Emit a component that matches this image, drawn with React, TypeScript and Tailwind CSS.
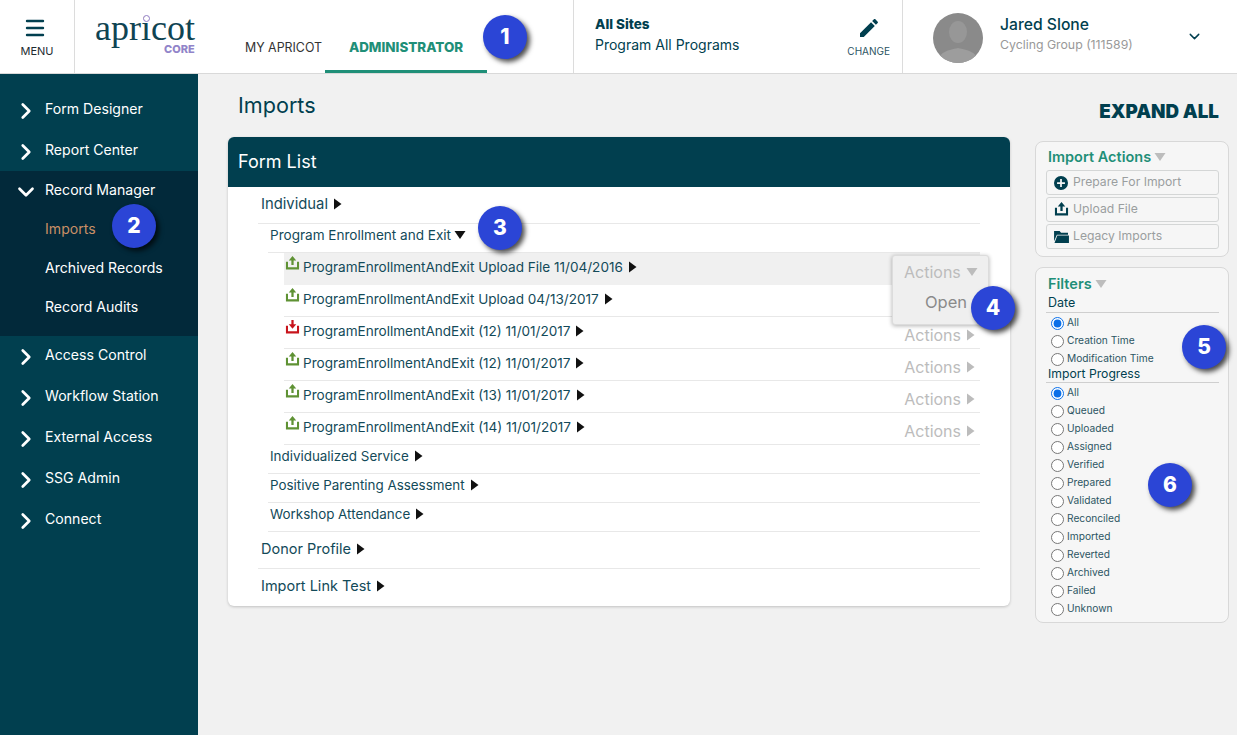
import React from "react";
import { ChevronDown, ChevronRight, Menu } from "lucide-react";

const Badge = ({ n, className }: { n: number; className: string }) => (
  <div
    className={`absolute z-30 w-11 h-11 rounded-full bg-[#2b45d6] text-white font-extrabold text-[21px] flex items-center justify-center shadow-[3px_3px_5px_rgba(0,0,0,0.7)] ${className}`}
  >
    {n}
  </div>
);

const Tri = ({ down, className = "" }: { down?: boolean; className?: string }) =>
  down ? (
    <svg viewBox="0 0 12 8" className={`w-3 h-2 fill-current ${className}`}>
      <path d="M0.5 0h11L6 8z" />
    </svg>
  ) : (
    <svg viewBox="0 0 8 12" className={`w-[9px] h-3 fill-current ${className}`}>
      <path d="M0.5 0.5L8 6l-7.5 5.5z" />
    </svg>
  );

const UploadIcon = ({ red, className = "" }: { red?: boolean; className?: string }) => (
  <svg viewBox="0 0 16 16" className={className} fill="currentColor">
    {red ? <path d="M6.8 0h2.4v4.5H12L8 9.2 4 4.5h2.8z" /> : <path d="M8 0l4 4.7H9.2v5H6.8v-5H4z" />}
    <path d="M1 6h2.2v6h9.6V6H15v8.4H1z" />
  </svg>
);

const sideTop = ["Form Designer", "Report Center"];
const sideBottom = ["Access Control", "Workflow Station", "External Access", "SSG Admin", "Connect"];

const SideItem = ({ label, className = "" }: { label: string; className?: string }) => (
  <div className={`h-[41px] flex items-center text-white ${className}`}>
    <ChevronRight className="w-[26px] h-[26px] ml-[13px] mr-[6px] mt-[4px]" strokeWidth={2.5} />
    <span>{label}</span>
  </div>
);

const files = [
  { name: "ProgramEnrollmentAndExit Upload File 11/04/2016", active: true },
  { name: "ProgramEnrollmentAndExit Upload 04/13/2017", covered: true },
  { name: "ProgramEnrollmentAndExit (12) 11/01/2017", red: true },
  { name: "ProgramEnrollmentAndExit (12) 11/01/2017" },
  { name: "ProgramEnrollmentAndExit (13) 11/01/2017" },
  { name: "ProgramEnrollmentAndExit (14) 11/01/2017" },
];

const Radio = ({ label, name, checked }: { label: string; name: string; checked?: boolean }) => (
  <label className="h-[18px] flex items-center pl-[5px] text-[10.2px] text-[#2c5563]">
    <input type="radio" name={name} defaultChecked={checked} className="w-[13px] h-[13px] m-0 mr-[3px] accent-[#0a6fe8]" />
    <span>{label}</span>
  </label>
);

const ActionBtn = ({ icon, label }: { icon: React.ReactNode; label: string }) => (
  <div className="h-[25px] border border-[#d4d6d6] rounded-[3px] flex items-center pl-[7px] text-[12.2px] text-[#9a9e9f]">
    <span className="w-[19px] text-[#013f4f] flex items-center">{icon}</span>
    {label}
  </div>
);

export default function App() {
  return (
    <div className="relative w-[1237px] h-[735px] overflow-hidden bg-[#f1f1f1] text-[14.1px] text-[#013f4f] font-['Inter',sans-serif]">
      {/* top bar */}
      <header className="h-[74px] bg-white border-b border-[#d9d9d9] flex">
        <div className="w-[75px] border-r border-[#dcdcdc] flex flex-col items-center pt-[16px]">
          <Menu className="w-[24px] h-[24px] mr-[4px] text-[#013f4f]" strokeWidth={2.4} />
          <span className="mt-[3px] text-[11px] text-[#1d2b30]">MENU</span>
        </div>
        <div className="relative w-[170px] shrink-0 pl-[20px] pt-[13px]">
          <div className="text-[36px] leading-[30px] text-[#0f4453] font-['Liberation_Serif',serif]">apricot</div>
          <span className="absolute left-[68px] top-[15px] w-[7px] h-[7px] rounded-full border border-[#8f7cc4] bg-white" />
          <div className="absolute left-[89px] top-[44px] text-[11px] leading-[11px] font-extrabold text-[#9184c9]">CORE</div>
        </div>
        <div className="flex items-end">
          <div className="h-full flex items-center pt-[24px] text-[12.4px] text-[#333] w-[80px] whitespace-nowrap">MY APRICOT</div>
          <div className="h-full w-[162px] flex items-center justify-center pt-[24px] text-[13.4px] font-extrabold text-[#1f8f78] border-b-[3px] border-[#1f8f78]">
            ADMINISTRATOR
          </div>
        </div>
        <div className="ml-[86px] w-[330px] border-l border-[#dcdcdc] border-r flex justify-between pl-[21px] pr-[12px]">
          <div className="pt-[14px]">
            <div className="text-[13.5px] font-extrabold leading-[20px]">All Sites</div>
            <div className="text-[14px] leading-[20px] mt-[1px]">Program All Programs</div>
          </div>
          <div className="flex flex-col items-center pt-[16px]">
            <svg viewBox="0 0 24 24" className="w-[24px] h-[24px] fill-[#013f4f]">
              <path d="M3 17.25V21h3.75L17.81 9.94l-3.75-3.75L3 17.25zM20.71 7.04c.39-.39.39-1.02 0-1.41l-2.34-2.34c-.39-.39-1.02-.39-1.41 0l-1.83 1.83 3.75 3.75 1.83-1.83z" />
            </svg>
            <span className="mt-[4px] text-[10px] text-[#2c5563]">CHANGE</span>
          </div>
        </div>
        <div className="flex flex-1 items-center pl-[30px]">
          <svg viewBox="0 0 50 50" className="w-[50px] h-[50px] mt-[2px] rounded-full">
            <rect width="50" height="50" fill="#8a8a8a" />
            <ellipse cx="25" cy="19" rx="9" ry="11" fill="#979797" />
            <path d="M5 50c0-11 10-13 20-15 10 2 20 4 20 15z" fill="#9d9d9d" />
          </svg>
          <div className="ml-[17px] -mt-[5px]">
            <div className="text-[15.7px] leading-[22px] font-medium">Jared Slone</div>
            <div className="text-[12.3px] leading-[18px] text-[#999]">Cycling Group (111589)</div>
          </div>
          <ChevronDown className="ml-[53px] w-[17px] h-[17px]" strokeWidth={2} />
        </div>
      </header>

      <div className="flex h-[661px]">
        {/* sidebar */}
        <aside className="w-[198px] shrink-0 bg-[#013f4f] pt-[14px]">
          {sideTop.map((s) => (
            <SideItem key={s} label={s} />
          ))}
          <div className="bg-[#02293a] h-[165px] mt-[1px]">
            <div className="h-[39px] pb-[2px] flex items-center text-white">
              <ChevronDown className="w-[26px] h-[26px] ml-[13px] mr-[6px] mt-[4px]" strokeWidth={2.5} />
              <span>Record Manager</span>
            </div>
            <div className="h-[39px] pb-[2px] flex items-center pl-[45px] text-[#c98f66]">Imports</div>
            <div className="h-[39px] pb-[2px] flex items-center pl-[45px] text-white">Archived Records</div>
            <div className="h-[39px] pb-[2px] flex items-center pl-[45px] text-white">Record Audits</div>
          </div>
          {sideBottom.map((s) => (
            <SideItem key={s} label={s} className="pb-[3px]" />
          ))}
        </aside>

        {/* content */}
        <main className="flex-1 pl-[30px] pr-[8px]">
          <div className="h-[63px] flex justify-between">
            <h1 className="pl-[10px] pt-[17px] text-[21.6px] leading-[28px]">Imports</h1>
            <div className="pt-[27px] pr-[10px] text-[18.8px] leading-[22px] font-black">EXPAND ALL</div>
          </div>
          <div className="flex items-start">
            {/* form list */}
            <section className="w-[782px] h-[469px] bg-white rounded-[6px] shadow-[0_1px_3px_rgba(0,0,0,0.2)] overflow-hidden text-[#134a59]">
              <div className="h-[50px] pb-[1px] bg-[#013f4f] text-white text-[18px] flex items-center pl-[10px]">Form List</div>
              <div className="pl-[30px] pr-[30px]">
                <div className="h-[37px] pb-[2px] border-b border-[#e8e8e8] flex items-center pl-[3px] text-[14.8px] gap-[5px]">
                  Individual <Tri className="text-[#111]" />
                </div>
                <div className="pl-[10px] text-[13.4px]">
                  <div className="h-[29px] pb-[6px] border-b border-[#e8e8e8] flex items-center pl-[2px] gap-[3px] text-[13.55px]">
                    Program Enrollment and Exit <Tri down className="text-[#111]" />
                  </div>
                  <div className="pl-[16px]">
                    {files.map((f) => (
                      <div
                        key={f.name + (f.red ? "r" : "")}
                        className={`h-[32px] pb-[3px] flex items-center justify-between pl-[1px] pr-[5px] border-b ${f.active ? "bg-[#f0f0f0] border-transparent" : "border-[#e8e8e8]"}`}
                      >
                        <div className="flex items-center">
                          <UploadIcon red={f.red} className={`w-[15px] h-[15px] mr-[3px] -mt-[8px] ${f.red ? "text-[#c8141c]" : "text-[#5f9234]"}`} />
                          <span className="text-[13.55px]">{f.name}</span>
                          <Tri className="ml-[5px] text-[#111]" />
                        </div>
                        {!f.active && !f.covered && (
                          <div className="flex items-center mt-[8px] text-[16px] text-[#bcbcbc] gap-[5px]">
                            Actions <Tri />
                          </div>
                        )}
                      </div>
                    ))}
                  </div>
                  <div className="h-[29px] pb-[6px] border-b border-[#e8e8e8] flex items-center pl-[2px] gap-[5px]">
                    Individualized Service <Tri className="text-[#111]" />
                  </div>
                  <div className="h-[29px] pb-[6px] border-b border-[#e8e8e8] flex items-center pl-[2px] gap-[5px]">
                    Positive Parenting Assessment <Tri className="text-[#111]" />
                  </div>
                  <div className="h-[29px] pb-[6px] border-b border-[#e8e8e8] flex items-center pl-[2px] gap-[5px]">
                    Workshop Attendance <Tri className="text-[#111]" />
                  </div>
                </div>
                <div className="h-[37px] pb-[3px] border-b border-[#e8e8e8] flex items-center pl-[3px] text-[14.5px] gap-[5px]">
                  Donor Profile <Tri className="text-[#111]" />
                </div>
                <div className="h-[37px] pb-[3px] flex items-center pl-[3px] text-[14.5px] gap-[5px]">
                  Import Link Test <Tri className="text-[#111]" />
                </div>
              </div>
            </section>

            {/* right column */}
            <div className="ml-[25px] w-[194px] mt-[4px] flex flex-col gap-[10px]">
              <div className="h-[116px] bg-[#f6f6f6] border border-[#d8d8d8] rounded-[8px] pl-[10px] pr-[9px] pt-[6px]">
                <div className="pl-[2px] flex items-center gap-[3px] text-[14.5px] leading-[18px] font-semibold text-[#1f8f78]">
                  Import Actions <Tri down className="text-[#bdbdbd]" />
                </div>
                <div className="mt-[4px] flex flex-col gap-[2px]">
                  <ActionBtn
                    label="Prepare For Import"
                    icon={
                      <svg viewBox="0 0 16 16" className="w-[14px] h-[14px]" fill="currentColor">
                        <path fillRule="evenodd" d="M8 0a8 8 0 100 16A8 8 0 008 0zM7 3.5h2V7h3.5v2H9v3.5H7V9H3.5V7H7z" />
                      </svg>
                    }
                  />
                  <ActionBtn label="Upload File" icon={<UploadIcon className="w-[15px] h-[15px]" />} />
                  <ActionBtn
                    label="Legacy Imports"
                    icon={
                      <svg viewBox="0 0 16 14" className="w-[15px] h-[13px]" fill="currentColor">
                        <path d="M0 1h6l1.5 2H15v2H3L0 12z" />
                        <path d="M3.5 6H16v8H0.5z" />
                      </svg>
                    }
                  />
                </div>
              </div>

              <div className="h-[356px] bg-[#f6f6f6] border border-[#d8d8d8] rounded-[8px] pl-[10px] pr-[9px] pt-[7px]">
                <div className="pl-[2px] flex items-center gap-[3px] text-[14.5px] leading-[18px] font-semibold text-[#1f8f78]">
                  Filters <Tri down className="text-[#bdbdbd]" />
                </div>
                <div className="mt-[1px] pl-[2px] text-[12.5px] leading-[17px] border-b border-[#cfcfcf] pb-[1px]">Date</div>
                <div className="pt-[1px]">
                  <Radio name="date" label="All" checked />
                  <Radio name="date" label="Creation Time" />
                  <Radio name="date" label="Modification Time" />
                </div>
                <div className="-mt-[2px] pl-[2px] text-[12.2px] leading-[15px] border-b border-[#cfcfcf] pb-[1px]">Import Progress</div>
                <div className="pt-[1px]">
                  {["All", "Queued", "Uploaded", "Assigned", "Verified", "Prepared", "Validated", "Reconciled", "Imported", "Reverted", "Archived", "Failed", "Unknown"].map((s) => (
                    <Radio key={s} name="progress" label={s} checked={s === "All"} />
                  ))}
                </div>
              </div>
            </div>
          </div>
        </main>
      </div>

      {/* open actions menu */}
      <div className="absolute z-20 left-[892px] top-[255px] w-[97px] h-[70px] bg-[#efefef] border border-[#dcdcdc] rounded-[3px] shadow-[0_1px_4px_rgba(0,0,0,0.3)]">
        <div className="flex items-center h-[31px] pl-[11px] gap-[5px] text-[16px] text-[#bcbcbc]">
          Actions <Tri down />
        </div>
        <div className="pl-[32px] pt-[3px] text-[16.5px] text-[#8a8a8a]">Open</div>
      </div>

      <Badge n={1} className="left-[483px] top-[15px]" />
      <Badge n={2} className="left-[112px] top-[204px]" />
      <Badge n={3} className="left-[478px] top-[206px]" />
      <Badge n={4} className="left-[971px] top-[286px]" />
      <Badge n={5} className="left-[1182px] top-[325px]" />
      <Badge n={6} className="left-[1148px] top-[463px]" />
    </div>
  );
}
